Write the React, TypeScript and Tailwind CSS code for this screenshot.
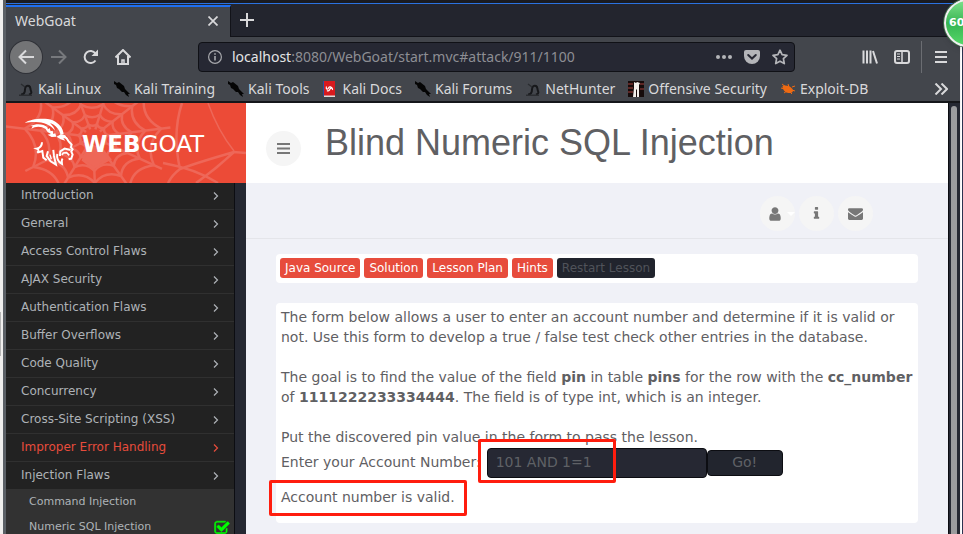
import React from "react";

const DEJAVU = "font-['DejaVu_Sans',sans-serif]";

const FA = {
  user: "M1536 1399q0 109-62.5 187t-150.5 78h-854q-88 0-150.5-78t-62.5-187q0-85 8.5-160.5t31.5-152 58.5-131 94-89 134.5-34.5q131 128 313 128t313-128q76 0 134.5 34.5t94 89 58.5 131 31.5 152 8.5 160.5zm-256-887q0 159-112.5 271.5t-271.5 112.5-271.5-112.5-112.5-271.5 112.5-271.5 271.5-112.5 271.5 112.5 112.5 271.5z",
  info: "M1216 1344v128q0 26-19 45t-45 19h-512q-26 0-45-19t-19-45v-128q0-26 19-45t45-19h64v-384h-64q-26 0-45-19t-19-45v-128q0-26 19-45t45-19h384q26 0 45 19t19 45v576h64q26 0 45 19t19 45zm-128-1152v192q0 26-19 45t-45 19h-256q-26 0-45-19t-19-45v-192q0-26 19-45t45-19h256q26 0 45 19t19 45z",
  mail: "M1792 710v794q0 66-47 113t-113 47h-1472q-66 0-113-47t-47-113v-794q44 49 101 87 362 246 497 345 57 42 92.5 65.5t94.5 48 110 24.5h2q51 0 110-24.5t94.5-48 92.5-65.5q170-123 498-345 57-39 100-87zm0-294q0 79-49 151t-122 123q-376 261-468 325-10 7-42.5 31t-54 38.5-52 32.5-57.5 27-50 9h-2q-23 0-50-9t-57.5-27-52-32.5-54-38.5-42.5-31q-91-64-262-182.5t-205-142.5q-62-42-117-115.5t-55-136.5q0-78 41.5-130t118.5-52h1472q65 0 112.5 47t47.5 113z",
  check: "M1472 930v318q0 119-84.5 203.5t-203.5 84.5h-832q-119 0-203.5-84.5t-84.5-203.5v-832q0-119 84.5-203.5t203.5-84.5h832q63 0 117 25 15 7 18 23 3 17-9 29l-49 49q-10 10-23 10-3 0-9-2-23-6-45-6h-832q-66 0-113 47t-47 113v832q0 66 47 113t113 47h832q66 0 113-47t47-113v-254q0-13 9-22l64-64q10-10 23-10 6 0 12 3 20 8 20 29zm231-489l-814 814q-24 24-57 24t-57-24l-430-430q-24-24-24-57t24-57l110-110q24-24 57-24t57 24l263 263 647-647q24-24 57-24t57 24l110 110q24 24 24 57t-24 57z",
};

function Fa({ d, className }: { d: string; className: string }) {
  return (
    <svg viewBox="0 0 1792 1792" className={className} fill="currentColor" aria-hidden="true">
      <path d={d} />
    </svg>
  );
}

function KaliDark() {
  return (
    <svg viewBox="0 0 16 16" className="size-4" fill="none" aria-hidden="true">
      <path d="M3 13.500c3 0 4-2 4-5 0-3 2-4.500 4-3.500s1 3 2 5 0 3-2 3.500" stroke="#17181b" strokeWidth="2" />
      <path d="M3 3l4 3M1 14.200h13" stroke="#2b2d31" strokeWidth="1.500" />
    </svg>
  );
}

function KaliKnife() {
  return (
    <svg viewBox="0 0 16 16" className="size-4" aria-hidden="true">
      <path d="M0 0l3 2 2-1 5 4 1 3 3 3 2 2-2 0 1 3-3-2-2-3-2 0-3-3-2-1-1-3-2-1z" fill="#050505" />
    </svg>
  );
}

function DocsIcon() {
  return (
    <svg viewBox="0 0 16 16" className="size-4" aria-hidden="true">
      <path d="M1 0h2v15H1z" fill="#2a4ea0" />
      <path d="M2 0h11v15H2z" fill="#d81a1e" />
      <path d="M2 14.500h11v1.500H2z" fill="#ddd" />
      <path d="M4.500 5.500C3.500 8 5.500 9 6.500 7s3-1 4 .5M5 9.500c1 1 2.500 0 3-1.500s3-1 2.500 1" stroke="#fff" strokeWidth="1.200" fill="none" />
    </svg>
  );
}

function OffsecIcon() {
  return (
    <svg viewBox="0 0 16 16" className="size-4" aria-hidden="true">
      <path d="M0 0h16v16H0z" fill="#160b0b" />
      <path d="M0 3h5M0 7h5M0 11h5M12 3h4M12 8h4" stroke="#5d2624" strokeWidth="2" />
      <path d="M6 1l2 1 1-1 3 1-1 2v12H9L9 8l-1 1v7H5l1-9z" fill="#f2efec" />
    </svg>
  );
}

function ExploitIcon() {
  return (
    <svg viewBox="0 0 16 16" className="size-4" aria-hidden="true">
      <path d="M2.500 5c3-1 7-.5 10 3 1.500 3-1 4.500-4 4-3 0-6-3-6-7z" fill="#ef6a12" />
      <path d="M2 3l4 3M1 7l4 1M4 12l3-2M8 3l1 3M12 6l3-1M12 9l3 1M10 11l2 2" stroke="#ef6a12" strokeWidth="1" />
    </svg>
  );
}

const bookmarks = [
  { label: "Kali Linux", icon: <KaliDark /> },
  { label: "Kali Training", icon: <KaliKnife /> },
  { label: "Kali Tools", icon: <KaliKnife /> },
  { label: "Kali Docs", icon: <DocsIcon /> },
  { label: "Kali Forums", icon: <KaliKnife /> },
  { label: "NetHunter", icon: <KaliDark /> },
  { label: "Offensive Security", icon: <OffsecIcon /> },
  { label: "Exploit-DB", icon: <ExploitIcon /> },
];

function NavButton({ label, className = "", children }: { label: string; className?: string; children: React.ReactNode }) {
  return (
    <button type="button" aria-label={label} className={`flex size-8 shrink-0 items-center justify-center rounded-full ${className}`}>
      <svg viewBox="0 0 16 16" className="size-4" fill="none" stroke="currentColor" strokeWidth="2" aria-hidden="true">
        {children}
      </svg>
    </button>
  );
}

function BrowserChrome() {
  return (
    <header className="shrink-0 font-['Noto_Sans',sans-serif] text-[#d9d9db]">
      <div className="h-[3px] bg-[#1a1b20]" />
      <div className="flex h-[34px] border-t border-b border-t-[#2b72e0] border-b-[#121319] bg-[#23252e]">
        <div className="mt-px -mb-px flex w-[225px] shrink-0 items-center justify-between border-t-2 border-r border-t-[#1f6ff0] border-r-[#121319] bg-[#43464c] pr-3 pb-[2px] pl-[9px]">
          <span className="text-sm">WebGoat</span>
          <button type="button" aria-label="Close tab">
            <svg viewBox="0 0 10 10" className="size-[10px]" stroke="currentColor" strokeWidth="1.700">
              <path d="M0.500 0.500l9 9M9.500 0.500l-9 9" />
            </svg>
          </button>
        </div>
        <button type="button" aria-label="New tab" className="flex w-8 items-center justify-center">
          <svg viewBox="0 0 14 14" className="size-[14px]" stroke="currentColor" strokeWidth="2">
            <path d="M7 0v14M0 7h14" />
          </svg>
        </button>
      </div>
      <div className="flex h-10 items-center bg-[#43464c] pr-[3px] pl-1">
        <NavButton label="Back" className="mr-px bg-[#737476] ring-1 ring-[#303238]">
          <path d="M1 8h15M8 1.500L1.500 8 8 14.500" />
        </NavButton>
        <NavButton label="Forward" className="text-[#77797d]">
          <path d="M0 8h15M8 1.500L14.500 8 8 14.500" />
        </NavButton>
        <NavButton label="Reload">
          <path d="M12.500 11.500A6 6 0 1 1 12.500 4.500" />
          <path d="M15 0.500v6.500H8.500z" fill="currentColor" stroke="none" />
        </NavButton>
        <NavButton label="Home">
          <path d="M0.500 8.500L8 1l7.500 7.500M3 7v8h10V7" />
          <path d="M7 15v-4h2v4" strokeWidth="1.500" />
        </NavButton>
        <div className="ml-[59px] flex h-[30px] min-w-0 flex-1 items-center rounded border border-[#101116] bg-[#262833] pr-[6px] pl-2">
          <svg viewBox="0 0 16 16" className="mr-[9px] size-4 shrink-0" fill="none" stroke="#a7a8ac" strokeWidth="1.200" aria-hidden="true">
            <circle cx="8" cy="8" r="6.400" />
            <path d="M8 7v4.500M8 4.200v1.600" strokeWidth="1.600" />
          </svg>
          <div className="relative min-w-0 flex-1">
            <div aria-hidden="true" className="text-sm leading-5 text-[#8d8e94]">
              <span className="text-[#e4e4e6]">localhost</span>:8080/WebGoat/start.mvc#attack/911/1100
            </div>
            <input
              aria-label="Address"
              defaultValue="localhost:8080/WebGoat/start.mvc#attack/911/1100"
              className="absolute inset-0 w-full bg-transparent text-sm leading-5 text-transparent outline-none"
            />
          </div>
          <div className="flex gap-3 text-[#b4b5b9]">
            <button type="button" aria-label="Page actions">
              <svg viewBox="0 0 16 16" className="size-4" fill="currentColor">
                <circle cx="2" cy="8" r="2" />
                <circle cx="8" cy="8" r="2" />
                <circle cx="14" cy="8" r="2" />
              </svg>
            </button>
            <button type="button" aria-label="Save to Pocket">
              <svg viewBox="0 0 16 16" className="size-4">
                <path d="M2 1h12a2 2 0 0 1 2 2v4a8 8 0 0 1-16 0V3a2 2 0 0 1 2-2z" fill="currentColor" />
                <path d="M4.200 6L8 9.600 11.800 6" fill="none" stroke="#262833" strokeWidth="2" strokeLinecap="round" />
              </svg>
            </button>
            <button type="button" aria-label="Bookmark this page">
              <svg viewBox="0 0 16 16" className="size-4" fill="none" stroke="currentColor" strokeWidth="1.700" strokeLinejoin="round">
                <path d="M8 1.200l2.100 4.500 4.900.6-3.600 3.400.9 4.900L8 12.200l-4.300 2.400.9-4.900L1 6.300l4.900-.6z" />
              </svg>
            </button>
          </div>
        </div>
        <div className="ml-[59px] flex items-center">
          <NavButton label="Library">
            <path d="M1.500 1.500v13M5 1.500v13M8.500 1.500v13M11 2l4 12.500" />
          </NavButton>
          <NavButton label="Sidebars">
            <rect x="1" y="2" width="14" height="12" rx="2" />
            <path d="M8 2v12" strokeWidth="1.500" />
            <path d="M3 5h3M3 7.500h3M3 10h3" strokeWidth="1" />
          </NavButton>
          <div className="mx-[3px] h-8 w-px bg-[#6b6d72]" />
          <NavButton label="Menu">
            <path d="M2 3h12M2 8h12M2 13h12" />
          </NavButton>
        </div>
      </div>
      <div className="flex h-[26px] items-center gap-[13px] border-b-2 border-[#15161a] bg-[#43464c] pr-3 pl-3">
        {bookmarks.map((b) => (
          <a key={b.label} href="#" className="flex items-center gap-1 text-sm leading-5 whitespace-nowrap">
            {b.icon}
            {b.label}
          </a>
        ))}
        <button type="button" aria-label="More bookmarks" className="ml-auto">
          <svg viewBox="0 0 14 12" className="h-3 w-[14px]" fill="none" stroke="currentColor" strokeWidth="2">
            <path d="M1.500 0.500L7 6l-5.500 5.500M7.500 0.500L13 6l-5.500 5.500" />
          </svg>
        </button>
      </div>
    </header>
  );
}

const HUB = { x: 87, y: 34 };
const SPOKES = [-172, -140, -108, -75, -42, -8, 28, 58, 88, 118, 150];
const RINGS = [13, 23, 34, 46, 60];

function webPoint(angle: number, radius: number): string {
  const a = (angle * Math.PI) / 180;
  return `${(HUB.x + Math.cos(a) * radius * 1.15).toFixed(1)} ${(HUB.y + Math.sin(a) * radius).toFixed(1)}`;
}

function webRing(radius: number): string {
  return SPOKES.map((angle, i) => {
    const next = i === SPOKES.length - 1 ? SPOKES[0] + 360 : SPOKES[i + 1];
    return `M${webPoint(angle, radius)}Q${webPoint((angle + next) / 2, radius * 0.76)} ${webPoint(next, radius)}`;
  }).join("");
}

function Logo() {
  return (
    <a href="#" className="relative flex h-20 w-60 shrink-0 items-center overflow-hidden bg-[#ec4b37]">
      <svg viewBox="0 0 240 80" className="absolute inset-0 h-20 w-60" fill="none" aria-hidden="true">
        <g stroke="#ee6758" strokeWidth="2.500">
          {SPOKES.map((angle) => (
            <path key={angle} d={`M${webPoint(angle, 8)}L${webPoint(angle, angle === -172 ? 90 : 68)}`} />
          ))}
          {RINGS.map((radius) => (
            <path key={radius} d={webRing(radius)} />
          ))}
          <path d="M202 0Q212 28 228 48" strokeWidth="1.500" />
          <path d="M240 50L228 49Q210 66 190 80M157 60Q190 66 212 80M228 49Q190 60 174 66M176 0Q166 30 174 66Q166 72 162 80" />
          <path d="M82 44h12l10 12-17 9-10-8z" fill="#ee6758" />
        </g>
        <g transform="translate(14 9) scale(0.333)" fill="#fff">
          <path d="M14 33C32 20 75 17 98 25c20 9 32 25 33 42l-9 1c-4-16-16-30-32-35 8 8 14 15 15 23C94 40 70 30 46 30c-10 0-22 1-32 3z" />
          <path d="M32 42c18-9 40-6 50 4l2 6 5-4 3 10 6-2 2 10 6-2 3 10-14 1-12-7 10-2-10-6-7-10c-12-8-30-8-42 0l4-7z" />
          <path d="M110 74l12-7 14 3 8 12-14-4 6 8-14-4z" />
          <g fill="none" stroke="#fff" strokeWidth="6" strokeLinejoin="miter">
            <path d="M138 76l8 12 9 10-2 8 5 6-4 7 4 9-4 12-8 2" />
            <path d="M152 114l-18-4-13 8-1 14" />
            <path d="M148 130l-8-8-10 1-4 6" strokeWidth="5" />
            <path d="M66 91q0 16-16 19 10 4 2 12l15-5 3 20 10 8" />
            <path d="M84 118l-4 14 12 16 16 10-6-26-2-18" />
            <path d="M112 126q-4 20 14 30-2-12 2-16" />
            <path d="M90 128l4 14" strokeWidth="4" />
          </g>
        </g>
      </svg>
      <span className="relative pt-px pl-[76px] text-[23px] leading-8 text-white">
        <b>WEB</b>GOAT
      </span>
    </a>
  );
}

const categories = [
  "Introduction",
  "General",
  "Access Control Flaws",
  "AJAX Security",
  "Authentication Flaws",
  "Buffer Overflows",
  "Code Quality",
  "Concurrency",
  "Cross-Site Scripting (XSS)",
  "Improper Error Handling",
  "Injection Flaws",
];

function Sidebar() {
  return (
    <div className="flex min-h-0 flex-1">
      <nav className="min-w-0 flex-1 overflow-hidden border-r border-[#0c0d12] bg-[#222222] text-xs">
        <ul className="-mt-px">
          {categories.map((name) => (
            <li key={name} className="border-b border-[#303030] last:border-b-0">
              <a
                href="#"
                className={`flex h-[27px] items-center justify-between pr-[15px] pb-px pl-[15px] ${
                  name === "Improper Error Handling" ? "text-[#e74c3c]" : "text-[#aeb2b7]"
                }`}
              >
                {name}
                <svg viewBox="0 0 6 8" className="mt-[2px] h-2 w-[6px]" fill="none" stroke="currentColor" strokeWidth="1.200" aria-hidden="true">
                  <path d="M1 0.500L4.500 4 1 7.500" />
                </svg>
              </a>
            </li>
          ))}
        </ul>
        <ul className="bg-[#323232] pt-px text-[11px] text-[#aeb2b7]">
          {["Command Injection", "Numeric SQL Injection"].map((name, i) => (
            <li key={name}>
              <a href="#" className="flex h-[25px] items-center justify-between pr-1 pl-[23px]">
                {name}
                {i === 1 && <Fa d={FA.check} className="size-4 stroke-current stroke-[60px] text-[#00ff00]" />}
              </a>
            </li>
          ))}
        </ul>
      </nav>
      <div className="w-[11px] bg-[#252832]" />
    </div>
  );
}

const lessonActions = ["Java Source", "Solution", "Lesson Plan", "Hints"];

const circle = "flex size-[35px] items-center justify-center rounded-full bg-[#f5f5f5] text-[#777777]";

function Lesson() {
  return (
    <main className="min-w-0 flex-1 bg-[#f0f1f7]">
      <div className="flex h-20 items-start bg-white pl-5">
        <button type="button" aria-label="Toggle menu" className={`mt-7 ${circle}`}>
          <svg viewBox="0 0 13 11" className="h-[11px] w-[13px]" stroke="currentColor" strokeWidth="2">
            <path d="M0 1h13M0 5.500h13M0 10h13" />
          </svg>
        </button>
        <h1 className="mt-5 ml-6 font-['Liberation_Sans',sans-serif] text-4xl leading-10 whitespace-nowrap text-[#5f6063]">
          Blind Numeric SQL Injection
        </h1>
      </div>
      <div className="flex h-14 items-center justify-end gap-1 border-b border-[#e4e5ea] pt-[10px] pr-[75px] pb-1">
        <button type="button" aria-label="User" className={`relative ${circle}`}>
          <Fa d={FA.user} className="mr-[5px] size-4" />
          <span className="absolute right-0 border-x-4 border-t-4 border-x-transparent border-t-white" />
        </button>
        <button type="button" aria-label="About" className={circle}>
          <Fa d={FA.info} className="size-[15px]" />
        </button>
        <button type="button" aria-label="Contact" className={circle}>
          <Fa d={FA.mail} className="size-[15px]" />
        </button>
      </div>
      <div className="px-[30px] pt-[15px]">
        <div className="flex gap-1 rounded bg-white px-1 pt-1 pb-[5px] text-xs leading-5">
          {lessonActions.map((label) => (
            <button type="button" key={label} className="rounded-[3px] bg-[#e74c3c] px-[5px] text-white">
              {label}
            </button>
          ))}
          <button type="button" className="rounded-[3px] bg-[#21242d] px-[5px] text-[#50535a]">
            Restart Lesson
          </button>
        </div>
        <section className="mt-5 rounded bg-white px-[5px] pt-1 pb-4 text-sm leading-5 text-[#5f6063]">
          <p>
            The form below allows a user to enter an account number and determine if it is valid or not. Use this form to
            develop a true / false test check other entries in the database.
          </p>
          <p className="mt-5">
            The goal is to find the value of the field <b>pin</b> in table <b>pins</b> for the row with the <b>cc_number</b>{" "}
            of <b>1111222233334444</b>. The field is of type int, which is an integer.
          </p>
          <p className="mt-5">Put the discovered pin value in the form to pass the lesson.</p>
          <form className="flex items-center pt-px" onSubmit={(e) => e.preventDefault()}>
            <label htmlFor="account" className="mr-[6px] pb-[2px] whitespace-nowrap">
              Enter your Account Number:
            </label>
            <div className="relative">
              <input
                id="account"
                defaultValue="101 AND 1=1"
                className="block h-[30px] w-[220px] rounded border border-[#0c0d12] bg-[#262833] px-2 pb-[2px] text-[#5f6166]"
              />
              <div className="pointer-events-none absolute -top-[9px] -left-[9px] h-11 w-[138px] rounded-xs border-3 border-[#ff1d0e]" />
            </div>
            <button type="submit" className="h-[26px] w-[76px] rounded border border-[#0c0d12] bg-[#22252e] pb-[2px] leading-4 text-[#5f6166]">
              Go!
            </button>
          </form>
          <p className="relative mt-[9px]">
            Account number is valid.
            <span className="pointer-events-none absolute -top-[7px] -left-3 h-9 w-[198px] rounded-xs border-3 border-[#ff1d0e]" />
          </p>
        </section>
      </div>
    </main>
  );
}

export default function App() {
  return (
    <div className={`relative flex h-screen overflow-hidden bg-[#f0efee] ${DEJAVU}`}>
      <div className="flex w-[6px] shrink-0 flex-col justify-center border-r-3 border-[#5b6066]">
        <div className="mt-[134px] h-11 w-px bg-[#b5b5b5]" />
      </div>
      <div className="flex min-w-0 flex-1 flex-col">
        <BrowserChrome />
        <div className="flex min-h-0 flex-1">
          <div className="flex w-60 shrink-0 flex-col">
            <Logo />
            <Sidebar />
          </div>
          <Lesson />
          <div className="flex w-3 shrink-0 border-l border-[#0c0d12] bg-[#252832] pt-[3px] pl-[2px]">
            <div className="w-[6px] rounded-t-full bg-[#9b9c9e]" />
          </div>
        </div>
      </div>
      <div className="w-[3px] shrink-0 border-x border-x-[#f4f4f6] border-r-[#2c3350] bg-white" />
      <div className="absolute -top-px -right-[29px] flex size-12 items-center rounded-full border-2 border-[#f0f0f0] bg-linear-to-b from-[#7be08a] via-[#35b552] to-[#55d768] pl-[3px] text-[11px] font-bold text-white shadow-md ring-1 ring-[#3a6b45]">
        60
      </div>
    </div>
  );
}
